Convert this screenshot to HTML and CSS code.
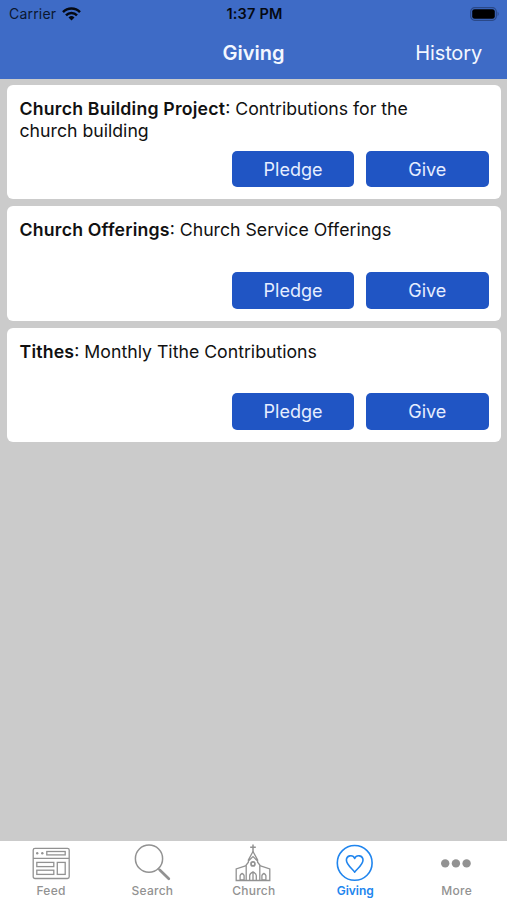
FILE: index.html
```html
<!DOCTYPE html>
<html lang="en">
<head>
<meta charset="utf-8">
<title>Giving</title>
<link rel="stylesheet" href="styles.css">
</head>
<body>
<div class="app">
  <header class="header">
    <div class="status">
      <div class="status-left">
        <span class="carrier">Carrier</span>
        <svg class="wifi" width="19" height="14" viewBox="0 0 19 14" fill="none" stroke="#050912" stroke-width="2.5">
          <path d="M1 5.1a12 12 0 0 1 17 0"/>
          <path d="M4 8.3a7.7 7.7 0 0 1 11 0"/>
          <path d="M9.5 13.4 6.5 10.4a4.3 4.3 0 0 1 6 0z" fill="#050912" stroke="none"/>
        </svg>
      </div>
      <span class="time">1:37 PM</span>
      <div class="status-right">
        <svg width="30" height="14" viewBox="0 0 30 14">
          <rect x=".7" y=".7" width="25.6" height="12.6" rx="4" fill="none" stroke="#2a4888" stroke-width="1.2"/>
          <rect x="2.2" y="2.2" width="22.6" height="9.6" rx="2.4" fill="#000"/>
          <path d="M27.6 4.6q2.2 2.4 0 4.8z" fill="#2a4888"/>
        </svg>
      </div>
    </div>
    <nav class="navbar">
      <h1 class="title">Giving</h1>
      <a class="history">History</a>
    </nav>
  </header>
  <main class="list">
    <section class="card">
      <p class="text"><b class="fund">Church Building Project</b><span>: Contributions for the</span><br><span>church building</span></p>
      <div class="actions"><button class="btn">Pledge</button><button class="btn">Give</button></div>
    </section>
    <section class="card">
      <p class="text"><b class="fund">Church Offerings</b><span>: Church Service Offerings</span></p>
      <div class="actions"><button class="btn">Pledge</button><button class="btn">Give</button></div>
    </section>
    <section class="card">
      <p class="text"><b class="fund">Tithes</b><span>: Monthly Tithe Contributions</span></p>
      <div class="actions"><button class="btn">Pledge</button><button class="btn">Give</button></div>
    </section>
  </main>
  <footer class="tabs">
    <a class="tab">
      <svg class="icon" width="40" height="40" viewBox="0 0 40 40" fill="none" stroke="currentColor" stroke-width="1.3">
        <rect x="2.2" y="5.3" width="36" height="30.2" rx="1.8"/>
        <path d="M2 15.4h36"/>
        <rect x="15.8" y="8.5" width="18.4" height="3.4"/>
        <rect x="5.8" y="19.4" width="17" height="4.2"/>
        <rect x="5.8" y="27.2" width="17" height="4.2"/>
        <rect x="26.3" y="19.4" width="7.9" height="12"/>
        <g fill="currentColor" stroke="none"><circle cx="6.2" cy="10.3" r="1.2"/><circle cx="11.3" cy="10.3" r="1.2"/></g>
      </svg>
      <span>Feed</span>
    </a>
    <a class="tab">
      <svg class="icon" width="40" height="40" viewBox="0 0 40 40" fill="none" stroke="currentColor">
        <circle cx="17" cy="15.7" r="13.6" stroke-width="1.5"/>
        <path d="m26 25.3 2.3 2.2" stroke-width="1.6"/>
        <path d="m27.8 27 9 8.8" stroke-width="2.7" stroke-linecap="round"/>
      </svg>
      <span>Search</span>
    </a>
    <a class="tab">
      <svg class="icon" width="40" height="40" viewBox="0 0 40 40" fill="none" stroke="currentColor" stroke-width="1.3">
        <path d="M20 1.5v8M17.2 4.2h5.6" stroke-width="1.5"/>
        <path d="M20 8.5 15.4 17v2.2L13.2 22v15.5M20 8.5l4.6 8.5v2.2l2.2 2.8v15.5M15.4 18 20 13.6l4.6 4.4"/>
        <path d="M13.2 22.6 3.2 26v11.5h33.6V26l-10-3.4"/>
        <circle cx="20" cy="20.9" r="2" stroke-width="1.7"/>
        <path d="M16.7 37.5v-5q0-2 3.3-3.6 3.3 1.6 3.3 3.6v5M20 29.5v8"/>
        <path d="M7.1 37v-4.3q.2-1.3 2-2.3 1.8 1 2 2.3V37zM28.9 37v-4.3q.2-1.3 2-2.3 1.8 1 2 2.3V37z"/>
      </svg>
      <span>Church</span>
    </a>
    <a class="tab active">
      <svg class="icon" width="40" height="40" viewBox="0 0 40 40" fill="none" stroke="currentColor" stroke-width="1.6">
        <circle cx="19.7" cy="19.9" r="17.4"/>
        <path d="M19.7 29.2c-1.5-3-8.3-6.8-8.3-12.1 0-4.8 6.5-6 8.3-1.6 1.8-4.4 8.3-3.2 8.3 1.6 0 5.3-6.8 9.1-8.3 12.1z" stroke-linejoin="round"/>
      </svg>
      <span>Giving</span>
    </a>
    <a class="tab">
      <svg class="icon" width="40" height="40" viewBox="0 0 40 40" fill="currentColor">
        <circle cx="9.2" cy="20.4" r="4.2"/><circle cx="19.9" cy="20.4" r="4.2"/><circle cx="30.6" cy="20.4" r="4.2"/>
      </svg>
      <span>More</span>
    </a>
  </footer>
</div>
</body>
</html>
```
FILE: styles.css
```css
* { box-sizing: border-box; }

body {
  margin: 0;
  font-family: Inter, "Liberation Sans", sans-serif;
  color: #111;
}

.app {
  height: 900px;
  display: flex;
  flex-direction: column;
  background: #cbcbcb;
  overflow: hidden;
}

.header {
  height: 79px;
  flex: none;
  background: #3e6bc6;
}

.status {
  height: 27px;
  padding: 0 7px 0 9px;
  display: grid;
  grid-template-columns: 1fr auto 1fr;
  align-items: center;
  color: #0b1730;
  font-size: 14px;
}

.status-left { display: flex; align-items: center; gap: 6px; }
.carrier { letter-spacing: .2px; }
.time { font-weight: 600; font-size: 14.5px; letter-spacing: .2px; color: #050912; }
.status-right { display: flex; justify-content: flex-end; }

.navbar {
  height: 52px;
  padding: 0 25px;
  display: grid;
  grid-template-columns: 1fr auto 1fr;
  align-items: center;
  color: #f3f7ff;
}

.title { grid-column: 2; margin: 0; font-size: 20px; font-weight: 600; line-height: 24px; }
.history { justify-self: end; font-size: 20px; line-height: 24px; letter-spacing: -.15px; }

.list {
  flex: 1;
  padding: 6px 6px 0 7px;
  display: flex;
  flex-direction: column;
  gap: 7px;
}

.card {
  height: 114.3px;
  padding: 13px 12.5px 12px;
  display: flex;
  flex-direction: column;
  justify-content: space-between;
  background: #fff;
  border-radius: 6px;
}

.text { margin: 0; width: 420px; font-size: 17.7px; line-height: 22px; }
.fund { font-weight: 600; letter-spacing: .2px; }

.actions { display: flex; justify-content: flex-end; gap: 12px; }

.btn {
  width: 122.3px;
  height: 36.5px;
  padding: 1px 0 0;
  border: 0;
  border-radius: 5px;
  background: #2055c4;
  color: #e6eeff;
  font: 400 18px/36px Inter, "Liberation Sans", sans-serif;
}

.tabs {
  height: 59.5px;
  flex: none;
  display: grid;
  grid-template-columns: repeat(5, 1fr);
  background: #fff;
}

.tab {
  padding-top: 2.5px;
  display: flex;
  flex-direction: column;
  align-items: center;
  color: #929292;
  font-size: 12px;
  font-weight: 500;
  line-height: 15px;
  letter-spacing: .25px;
}

.tab span { padding-left: .7px; }
.active { color: #2085ee; font-weight: 600; letter-spacing: 0; }
.icon { flex: none; }
```
